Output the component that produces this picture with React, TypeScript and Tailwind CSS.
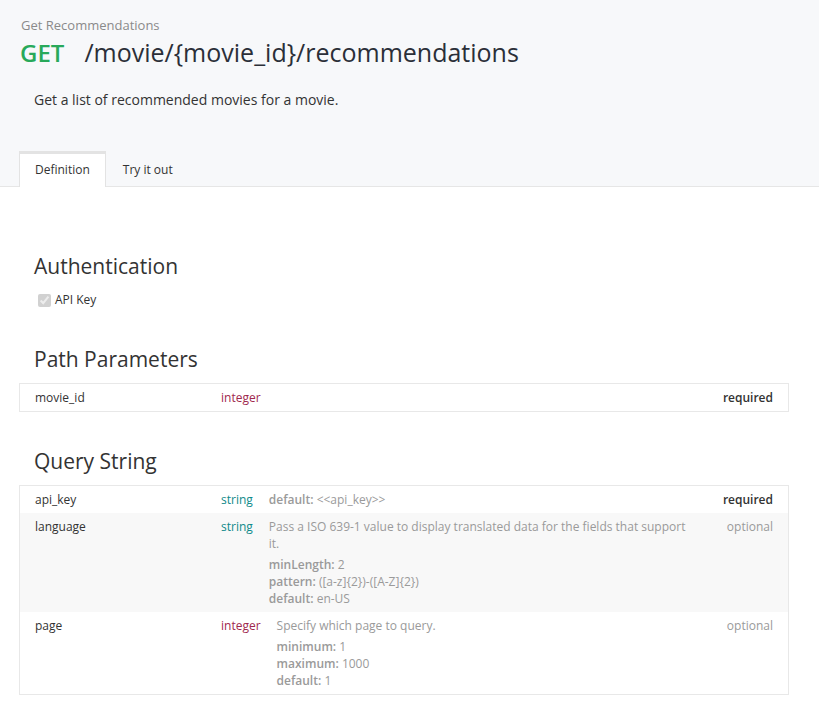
import type React from "react";
import type { ReactElement } from "react";

type Param = {
  name: string;
  type: "string" | "integer";
  desc?: string;
  props?: [string, string][];
  required?: boolean;
  shaded?: boolean;
};

const queryParams: Param[] = [
  { name: "api_key", type: "string", props: [["default", "<<api_key>>"]], required: true },
  {
    name: "language",
    type: "string",
    desc: "Pass a ISO 639-1 value to display translated data for the fields that support it.",
    props: [
      ["minLength", "2"],
      ["pattern", "([a-z]{2})-([A-Z]{2})"],
      ["default", "en-US"],
    ],
    shaded: true,
  },
  {
    name: "page",
    type: "integer",
    desc: "Specify which page to query.",
    props: [
      ["minimum", "1"],
      ["maximum", "1000"],
      ["default", "1"],
    ],
  },
];

const ParamRow = ({ p }: { p: Param }): ReactElement => {
  const onlyProps = !p.desc;
  return (
    <div className={`flex px-[15px] py-[5px] text-[12px] leading-[17px] ${p.shaded ? "bg-[#f8f8f8]" : "bg-white"}`}>
      <div className="w-[186px] shrink-0 text-[#333]">{p.name}</div>
      <div className={`shrink-0 mr-4 ${p.type === "string" ? "text-[#0f8a8a]" : "text-[#a0284e]"}`}>{p.type}</div>
      <div className="flex-1 text-[#9a9a9a]">
        {p.desc && <div>{p.desc}</div>}
        {p.props && (
          <div className={onlyProps ? "" : "mt-1"}>
            {p.props.map(([k, v]) => (
              <div key={k}>
                <span className="font-semibold">{k}:</span> {v}
              </div>
            ))}
          </div>
        )}
      </div>
      <div className={`w-[81px] shrink-0 text-right ${p.required ? "font-semibold text-[#333]" : "text-[#9a9a9a]"}`}>
        {p.required ? "required" : "optional"}
      </div>
    </div>
  );
};

const App: React.FC = (): ReactElement => {
  return (
    <div className="min-h-screen bg-white text-[#333]" style={{ fontFamily: '"Open Sans", "Liberation Sans", sans-serif' }}>
      <header className="bg-[#f7f8fa] border-b border-[#e6e6e6]">
        <div className="pt-4 pl-[21px] text-[13px] leading-[18px] text-[#8a8a8a]">Get Recommendations</div>
        <h1 className="mt-[2px] pl-[20px] text-[25px] leading-[32px] text-[#2b2f38]">
          <span className="text-[24px] font-semibold text-[#28a95a] mr-[20px]">GET</span>
          /movie/&#123;movie_id&#125;/recommendations
        </h1>
        <p className="mt-[21px] pl-[34px] text-[14px] leading-[20px] text-[#333]">
          Get a list of recommended movies for a movie.
        </p>
        <nav className="mt-[41px] pl-[19px] flex text-[12px] leading-[17px]">
          <div className="-mb-px bg-white border-x border-t-[3px] border-[#e3e3e3] px-[15px] pt-[7px] pb-[8px] text-[#333]">
            Definition
          </div>
          <div className="px-[17px] pt-[10px] pb-[8px] text-[#333]">Try it out</div>
        </nav>
      </header>

      <main className="px-[19px] pr-[30px]">
        <h2 className="mt-[64px] pl-[15px] text-[21px] leading-[30px] text-[#333]">Authentication</h2>
        <label className="mt-[11px] pl-[15px] flex items-center text-[12px] leading-[16px] text-[#333]">
          <input type="checkbox" checked disabled readOnly className="m-0 ml-[4px] mr-[4px] w-[13px] h-[13px]" />
          API Key
        </label>

        <h2 className="mt-[36px] pl-[15px] text-[21px] leading-[30px] text-[#333]">Path Parameters</h2>
        <div className="mt-[9px] border border-[#e8e8e8]">
          <div className="flex px-[15px] py-[5px] text-[12px] leading-[17px]">
            <div className="w-[186px] shrink-0 text-[#333]">movie_id</div>
            <div className="flex-1 text-[#a0284e]">integer</div>
            <div className="w-[81px] shrink-0 text-right font-semibold text-[#333]">required</div>
          </div>
        </div>

        <h2 className="mt-[34px] pl-[15px] text-[21px] leading-[30px] text-[#333]">Query String</h2>
        <div className="mt-[9px] border border-[#e8e8e8]">
          {queryParams.map((p) => (
            <ParamRow key={p.name} p={p} />
          ))}
        </div>
      </main>
    </div>
  );
};

export default App;
